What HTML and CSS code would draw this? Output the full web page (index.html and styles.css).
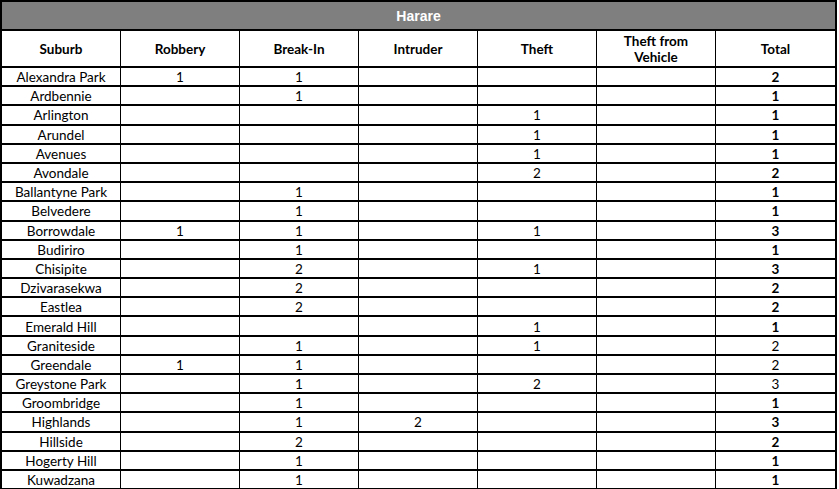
FILE: index.html
```html
<!DOCTYPE html>
<html>
<head>
<meta charset="utf-8">
<link rel="stylesheet" href="styles.css">
</head>
<body>
<table class="crime">
  <colgroup>
    <col class="c-suburb"><col class="c-num"><col class="c-num"><col class="c-num"><col class="c-num"><col class="c-num"><col class="c-total">
  </colgroup>
  <thead>
    <tr class="title-row"><th colspan="7" class="title">Harare</th></tr>
    <tr class="head-row">
      <th>Suburb</th><th>Robbery</th><th>Break-In</th><th>Intruder</th><th>Theft</th><th class="wrap">Theft from<br>Vehicle</th><th class="last">Total</th>
    </tr>
  </thead>
  <tbody>
    <tr><td>Alexandra Park</td><td>1</td><td>1</td><td></td><td></td><td></td><td class="last b">2</td></tr>
    <tr><td>Ardbennie</td><td></td><td>1</td><td></td><td></td><td></td><td class="last b">1</td></tr>
    <tr><td>Arlington</td><td></td><td></td><td></td><td>1</td><td></td><td class="last b">1</td></tr>
    <tr><td>Arundel</td><td></td><td></td><td></td><td>1</td><td></td><td class="last b">1</td></tr>
    <tr><td>Avenues</td><td></td><td></td><td></td><td>1</td><td></td><td class="last b">1</td></tr>
    <tr><td>Avondale</td><td></td><td></td><td></td><td>2</td><td></td><td class="last b">2</td></tr>
    <tr><td>Ballantyne Park</td><td></td><td>1</td><td></td><td></td><td></td><td class="last b">1</td></tr>
    <tr><td>Belvedere</td><td></td><td>1</td><td></td><td></td><td></td><td class="last b">1</td></tr>
    <tr><td>Borrowdale</td><td>1</td><td>1</td><td></td><td>1</td><td></td><td class="last b">3</td></tr>
    <tr><td>Budiriro</td><td></td><td>1</td><td></td><td></td><td></td><td class="last b">1</td></tr>
    <tr><td>Chisipite</td><td></td><td>2</td><td></td><td>1</td><td></td><td class="last b">3</td></tr>
    <tr><td>Dzivarasekwa</td><td></td><td>2</td><td></td><td></td><td></td><td class="last b">2</td></tr>
    <tr><td>Eastlea</td><td></td><td>2</td><td></td><td></td><td></td><td class="last b">2</td></tr>
    <tr><td>Emerald Hill</td><td></td><td></td><td></td><td>1</td><td></td><td class="last b">1</td></tr>
    <tr><td>Graniteside</td><td></td><td>1</td><td></td><td>1</td><td></td><td class="last">2</td></tr>
    <tr><td>Greendale</td><td>1</td><td>1</td><td></td><td></td><td></td><td class="last">2</td></tr>
    <tr><td>Greystone Park</td><td></td><td>1</td><td></td><td>2</td><td></td><td class="last">3</td></tr>
    <tr><td>Groombridge</td><td></td><td>1</td><td></td><td></td><td></td><td class="last b">1</td></tr>
    <tr><td>Highlands</td><td></td><td>1</td><td>2</td><td></td><td></td><td class="last b">3</td></tr>
    <tr><td>Hillside</td><td></td><td>2</td><td></td><td></td><td></td><td class="last b">2</td></tr>
    <tr><td>Hogerty Hill</td><td></td><td>1</td><td></td><td></td><td></td><td class="last b">1</td></tr>
    <tr><td>Kuwadzana</td><td></td><td>1</td><td></td><td></td><td></td><td class="last b">1</td></tr>
  </tbody>
</table>
</body>
</html>
```
FILE: styles.css
```css
html, body {
  margin: 0;
  padding: 0;
  background: #ffffff;
}

.crime {
  table-layout: fixed;
  border-collapse: separate;
  border-spacing: 0;
  width: 837px;
  border-top: 2px solid #000;
  border-left: 2px solid #000;
  font-family: "Lato", "Liberation Sans", sans-serif;
  font-size: 13.5px;
  color: #000;
}

.c-suburb { width: 119px; }
.c-num { width: 119px; }
.c-total { width: 121px; }

.crime th,
.crime td {
  padding: 0;
  text-align: center;
  vertical-align: middle;
  border-right: 1px solid #000;
  border-bottom: 2px solid #000;
  box-sizing: border-box;
  white-space: nowrap;
  overflow: hidden;
}

.crime .last {
  border-right: 2px solid #000;
}

.title-row .title {
  height: 29px;
  background: #7f7f7f;
  color: #ffffff;
  font-family: "Liberation Sans", Arial, sans-serif;
  font-weight: bold;
  font-size: 14px;
  border-right: 2px solid #000;
}

.head-row th {
  height: 37px;
  font-weight: bold;
  line-height: 16px;
  padding-top: 1px;
}

.crime tbody td {
  height: 19.2px;
  line-height: 16px;
  padding-top: 1px;
}

.crime .b {
  font-weight: bold;
}
```
